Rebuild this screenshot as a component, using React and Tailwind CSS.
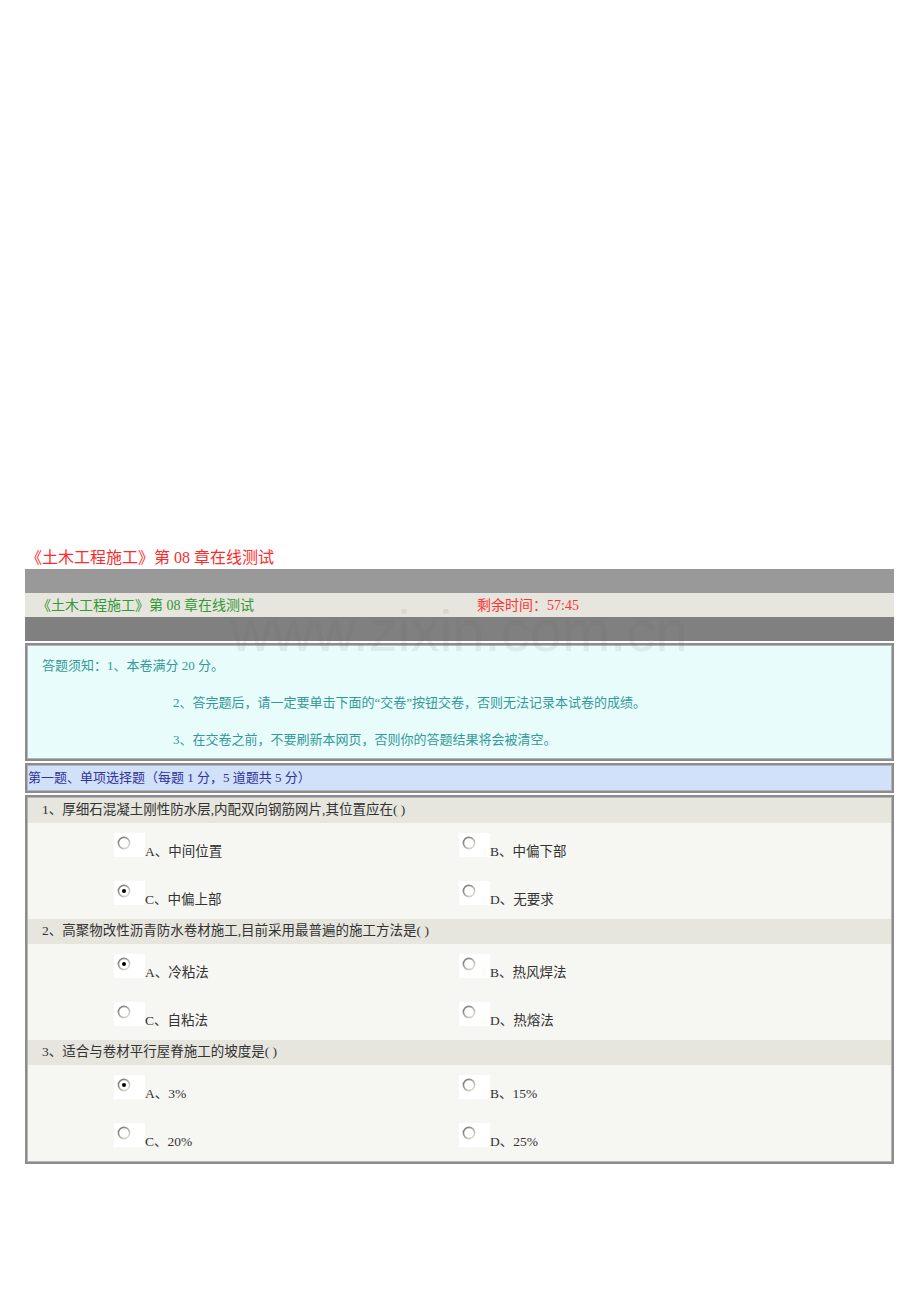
const questions = [
  {
    title: "1、厚细石混凝土刚性防水层,内配双向钢筋网片,其位置应在( )",
    options: ["A、中间位置", "B、中偏下部", "C、中偏上部", "D、无要求"],
    checked: 2,
  },
  {
    title: "2、高聚物改性沥青防水卷材施工,目前采用最普遍的施工方法是( )",
    options: ["A、冷粘法", "B、热风焊法", "C、自粘法", "D、热熔法"],
    checked: 0,
  },
  {
    title: "3、适合与卷材平行屋脊施工的坡度是( )",
    options: ["A、3%", "B、15%", "C、20%", "D、25%"],
    checked: 0,
  },
];

const font = { fontFamily: '"Liberation Serif", "Noto Sans CJK SC", serif' };

const Radio = ({ on }) => (
  <svg width="14" height="14" viewBox="0 0 14 14" className="block">
    <defs>
      <linearGradient id={on ? "rg-on" : "rg-off"} x1="0" y1="0" x2="1" y2="1">
        <stop offset="0" stopColor="#6f6f6f" />
        <stop offset="0.5" stopColor="#a8a8a0" />
        <stop offset="1" stopColor="#ecebe4" />
      </linearGradient>
    </defs>
    <circle cx="7" cy="7" r="5.6" fill="#ffffff" stroke={`url(#${on ? "rg-on" : "rg-off"})`} strokeWidth="1.6" />
    {on && <circle cx="7" cy="7" r="2" fill="#000000" />}
  </svg>
);

const Option = ({ label, on }) => (
  <div className="flex items-end h-[24px]">
    <div className="w-[31px] h-[24px] bg-white pt-[3px] pl-[3px]">
      <Radio on={on} />
    </div>
    <span className="text-[13.5px] leading-[16px] text-[#333333] -mb-[3px]">{label}</span>
  </div>
);

const Box = ({ className, children }) => (
  <div className="border-2 border-[#8c8c8c]">
    <div className={`border border-[#b4b4b4] ${className}`}>{children}</div>
  </div>
);

export default function App() {
  return (
    <div className="relative min-h-[1302px] bg-white pt-[547px]" style={font}>
      <div className="ml-[26px] text-[16px] leading-[22px] text-[#ff2a2a]">
        《土木工程施工》第 08 章在线测试
      </div>

      <div className="ml-[25px] w-[869px]">
        <div className="h-[24px] bg-[#999999]" />
        <div className="h-[24px] bg-[#e6e5de] flex items-center text-[14px]">
          <span className="w-[452px] pl-[12px] text-[#339933]">《土木工程施工》第 08 章在线测试</span>
          <span className="text-[#ff3333]">剩余时间：57:45</span>
        </div>
        <div className="h-[24px] bg-[#808080]" />
        <div className="h-[2px] bg-white" />

        <div className="flex flex-col gap-[2px]">
          <Box className="bg-[#e8fcfc] pt-[1px] text-[13px] leading-[37px] text-[#339999]">
            <div className="pl-[14px]">答题须知：1、本卷满分 20 分。</div>
            <div className="pl-[145px]">2、答完题后，请一定要单击下面的“交卷”按钮交卷，否则无法记录本试卷的成绩。</div>
            <div className="pl-[145px]">3、在交卷之前，不要刷新本网页，否则你的答题结果将会被清空。</div>
          </Box>

          <Box className="bg-[#d0e1f9] h-[26px] flex items-center text-[13px] text-[#333399]">
            <span>第一题、单项选择题（每题 1 分，5 道题共 5 分）</span>
          </Box>

          <Box className="bg-[#f6f6f2]">
            {questions.map((q, qi) => (
              <div key={qi}>
                <div className="h-[25px] bg-[#e6e5de] flex items-center pl-[14px] text-[13.5px] text-[#333333]">
                  {q.title}
                </div>
                <div className="pl-[86px] pt-[10px] pb-[14px] grid grid-cols-[345px_1fr] gap-y-[24px]">
                  {q.options.map((o, oi) => (
                    <Option key={oi} label={o} on={oi === q.checked} />
                  ))}
                </div>
              </div>
            ))}
          </Box>
        </div>
      </div>

      <div
        className="absolute left-[230px] top-[602px] text-[58px] leading-[58px] text-[#646464]/10 pointer-events-none select-none"
        style={{ fontFamily: '"Liberation Sans", sans-serif' }}
      >
        www.zixin.com.cn
      </div>
    </div>
  );
}
